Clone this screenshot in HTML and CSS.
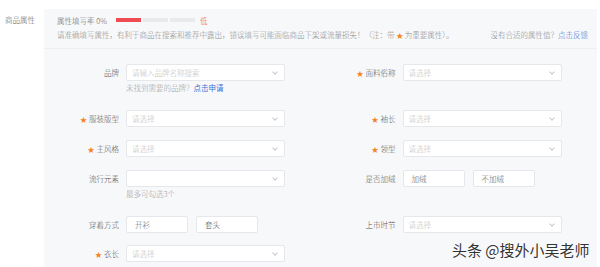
FILE: index.html
```html
<!DOCTYPE html>
<html lang="zh-CN">
<head>
<meta charset="utf-8">
<link rel="stylesheet" href="styles.css">
</head>
<body>
<div class="page">
  <div class="side">商品属性</div>
  <div class="panel">
    <div class="head">
      <div class="rate">
        <span class="rate-label">属性填写率 0%</span>
        <span class="bar"><i class="seg on"></i><i class="seg"></i><i class="seg"></i></span>
        <span class="low">低</span>
      </div>
      <div class="tip">
        <span>请准确填写属性，有利于商品在搜索和推荐中露出，错误填写可能面临商品下架或流量损失！（注：带 <b class="star">★</b> 为重要属性）。</span>
        <span class="fb">没有合适的属性值？<a class="link">点击反馈</a></span>
      </div>
    </div>
    <div class="form">
      <div class="row">
        <div class="field">
          <label class="lbl">品牌</label>
          <div class="ctl">
            <div class="sel"><span class="ph">请输入品牌名称搜索</span><span class="chev"></span></div>
            <div class="help">未找到需要的品牌？<a class="link">点击申请</a></div>
          </div>
        </div>
        <div class="field">
          <label class="lbl"><b class="star">★</b>面料俗称</label>
          <div class="ctl"><div class="sel"><span class="ph">请选择</span><span class="chev"></span></div></div>
        </div>
      </div>
      <div class="row">
        <div class="field">
          <label class="lbl"><b class="star">★</b>服装版型</label>
          <div class="ctl"><div class="sel"><span class="ph">请选择</span><span class="chev"></span></div></div>
        </div>
        <div class="field">
          <label class="lbl"><b class="star">★</b>袖长</label>
          <div class="ctl"><div class="sel"><span class="ph">请选择</span><span class="chev"></span></div></div>
        </div>
      </div>
      <div class="row">
        <div class="field">
          <label class="lbl"><b class="star">★</b>主风格</label>
          <div class="ctl"><div class="sel"><span class="ph">请选择</span><span class="chev"></span></div></div>
        </div>
        <div class="field">
          <label class="lbl"><b class="star">★</b>领型</label>
          <div class="ctl"><div class="sel"><span class="ph">请选择</span><span class="chev"></span></div></div>
        </div>
      </div>
      <div class="row">
        <div class="field">
          <label class="lbl">流行元素</label>
          <div class="ctl">
            <div class="sel"><span class="ph"></span><span class="chev"></span></div>
            <div class="help">最多可勾选3个</div>
          </div>
        </div>
        <div class="field">
          <label class="lbl">是否加绒</label>
          <div class="ctl opts"><div class="opt">加绒</div><div class="opt">不加绒</div></div>
        </div>
      </div>
      <div class="row">
        <div class="field">
          <label class="lbl">穿着方式</label>
          <div class="ctl opts"><div class="opt">开衫</div><div class="opt">套头</div></div>
        </div>
        <div class="field">
          <label class="lbl">上市时节</label>
          <div class="ctl"><div class="sel"><span class="ph">请选择</span><span class="chev"></span></div></div>
        </div>
      </div>
      <div class="row">
        <div class="field">
          <label class="lbl"><b class="star">★</b>衣长</label>
          <div class="ctl"><div class="sel"><span class="ph">请选择</span><span class="chev"></span></div></div>
        </div>
      </div>
    </div>
  </div>
  <div class="mark">头条 @搜外小吴老师</div>
</div>
</body>
</html>
```
FILE: styles.css
```css
* { box-sizing: border-box; }
html, body { margin: 0; padding: 0; background: #fff; }
body {
  font-family: "Noto Sans CJK SC", "Noto Sans", sans-serif;
  font-size: 7.5px;
  font-weight: 300;
  color: #555;
  width: 600px;
  height: 267px;
  overflow: hidden;
}
.page {
  position: relative;
  display: flex;
  height: 267px;
}
.side {
  width: 44px;
  padding: 15px 0 0 5px;
  line-height: 10px;
  color: #666;
  flex: none;
}
.panel {
  width: 553px;
  margin-top: 9px;
  background: #f7f8fa;
  flex: none;
}
.head {
  padding: 6px 9px 0 13px;
  height: 40px;
  border-bottom: 1px solid #eeeff2;
}
.rate {
  display: flex;
  align-items: center;
  height: 10px;
}
.rate-label { color: #666; width: 59px; }
.bar { display: flex; gap: 2px; }
.seg {
  display: block;
  width: 25px;
  height: 4px;
  background: #e9eaec;
}
.seg.on { background: #f04b52; }
.low { color: #f04b52; margin-left: 5px; }
.tip {
  display: flex;
  justify-content: space-between;
  margin-top: 5px;
  line-height: 10px;
  color: #8a8a8a;
}
.star {
  color: #f58220;
  font-weight: normal;
  font-size: 7px;
}
.link { color: #3a6fd8; }
.fb { color: #8a8a8a; }
.form { padding: 15px 0 0 0; }
.row {
  display: flex;
  margin-bottom: 12px;
}
.field {
  display: flex;
  width: 279px;
  align-items: flex-start;
}
.lbl {
  width: 75px;
  margin-right: 7px;
  text-align: right;
  line-height: 17px;
  color: #555;
  flex: none;
}
.lbl .star { margin-right: 2px; }
.ctl { width: 159px; }
.sel {
  height: 17px;
  background: #fff;
  border: 1px solid #e6e7ea;
  border-radius: 2px;
  display: flex;
  align-items: center;
  justify-content: space-between;
  padding: 0 7px 0 5px;
}
.ph { color: #c0c0c0; }
.chev {
  width: 4px;
  height: 4px;
  border-right: 1px solid #c6c8cc;
  border-bottom: 1px solid #c6c8cc;
  transform: rotate(45deg);
  margin-top: -2px;
}
.help {
  line-height: 14px;
  height: 17px;
  color: #a0a0a0;
}
.help .link { color: #3a6fd8; font-weight: 400; }
.opts { display: flex; gap: 8px; }
.opt {
  width: 62px;
  height: 17px;
  line-height: 15px;
  background: #fff;
  border: 1px solid #e6e7ea;
  border-radius: 2px;
  padding-left: 8px;
  color: #555;
}
.mark {
  position: absolute;
  left: 452px;
  top: 240px;
  font-size: 15px;
  font-weight: 400;
  line-height: 20px;
  color: #333;
  text-shadow: 0 0 2px #fff, 0 0 2px #fff;
}
```
